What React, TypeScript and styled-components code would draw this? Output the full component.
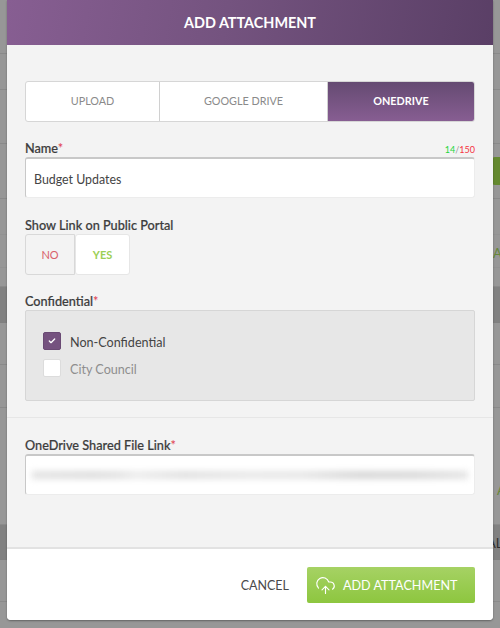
import React from 'react';
import styled, { createGlobalStyle } from 'styled-components';
import { CloudUpload, Check } from 'lucide-react';

const GlobalStyle = createGlobalStyle`
    html, body {
        margin: 0;
        padding: 0;
        height: 100%;
        overflow: hidden;
        background: #979797;
        font-family: Lato, "Open Sans", sans-serif;
    }
    * {
        box-sizing: border-box;
    }
`;

const Page = styled.div`
    position: relative;
    width: 500px;
    height: 628px;
    overflow: hidden;
    background: #979797;
`;

const BackRow = styled.div<{ $height: number; $band?: boolean; $faint?: boolean }>`
    position: relative;
    height: ${({ $height }) => $height}px;
    border-bottom: 1px solid ${({ $band, $faint }) => ($band ? '#808080' : $faint ? '#929292' : '#8a8a8a')};
    background: ${({ $band }) => ($band ? '#818181' : '#979797')};
`;

const BackButton = styled.div`
    position: absolute;
    top: 13px;
    right: 0;
    width: 8px;
    height: 28px;
    border-radius: 3px 0 0 3px;
    background: #64892f;
`;

const BackText = styled.span<{ $color: string; $top: number; $left: number }>`
    position: absolute;
    top: ${({ $top }) => $top}px;
    left: ${({ $left }) => $left}px;
    font-size: 13px;
    line-height: 16px;
    white-space: nowrap;
    color: ${({ $color }) => $color};
`;

const Modal = styled.div`
    position: absolute;
    top: 0;
    left: 7px;
    width: 486px;
    height: 620px;
    display: flex;
    flex-direction: column;
    border-radius: 0 0 4px 4px;
    overflow: hidden;
    background: #f3f3f3;
    box-shadow: 0 1px 2px rgba(0, 0, 0, 0.35);
`;

const Header = styled.div`
    height: 45px;
    flex: none;
    display: flex;
    align-items: center;
    justify-content: center;
    background: linear-gradient(100deg, #875e92 0%, #74537f 45%, #5a3f66 100%);
    color: #fff;
    font-size: 14.4px;
    font-weight: 700;
`;

const Body = styled.div`
    flex: 1;
    display: flex;
    flex-direction: column;
    min-height: 0;
`;

const Section = styled.div`
    padding: 36px 18px 0;
`;

const Tabs = styled.div`
    display: flex;
    height: 41px;
    overflow: hidden;
    border: 1px solid #d6d6d6;
    border-radius: 3px;
    background: #fff;
`;

const Tab = styled.div<{ $width: number; $active?: boolean }>`
    width: ${({ $width }) => $width}px;
    padding-bottom: 2px;
    display: flex;
    align-items: center;
    justify-content: center;
    font-size: 10.8px;
    font-weight: ${({ $active }) => ($active ? 700 : 400)};
    color: ${({ $active }) => ($active ? '#fff' : '#8a8a8a')};
    border-right: ${({ $active }) => ($active ? 'none' : '1px solid #d0d0d0')};
    background: ${({ $active }) =>
        $active ? 'linear-gradient(180deg, #654a72 0%, #875e92 100%)' : 'transparent'};
`;

const LabelRow = styled.div<{ $top: number }>`
    display: flex;
    align-items: flex-end;
    justify-content: space-between;
    height: 16px;
    margin-top: ${({ $top }) => $top}px;
`;

const Label = styled.label`
    font-size: 12.7px;
    line-height: 16px;
    font-weight: 500;
    color: #3d3d3d;
    -webkit-text-stroke: 0.2px #3d3d3d;
`;

const Required = styled.span`
    color: #e0404f;
    -webkit-text-stroke: 0;
`;

const Counter = styled.span`
    font-size: 9px;
    line-height: 12px;
    color: #999;
`;

const CountValue = styled.span<{ $color: string }>`
    color: ${({ $color }) => $color};
`;

const InputBox = styled.div`
    height: 41px;
    margin-top: 1px;
    padding-left: 8px;
    display: flex;
    align-items: center;
    border-radius: 3px;
    background: #fff;
    border-top: 2px solid #c8c8c8;
    border-left: 1px solid #c8c8c8;
    border-right: 1px solid #ececec;
    border-bottom: 1px solid #ececec;
    font-size: 12.4px;
    color: #444;
`;

const InputValue = styled.span`
    padding-top: 2px;
`;

const BlurredLink = styled.div`
    width: 436px;
    height: 8px;
    margin-left: -2px;
    filter: blur(3px);
    background: linear-gradient(
        90deg,
        #e2e2e2 0%,
        #dddddd 14%,
        #e2e2e2 20%,
        #ececec 24%,
        #e0e0e0 35%,
        #e8e8e8 50%,
        #e6e6e6 62%,
        #d6d6d6 75%,
        #d8d8d8 88%,
        #e4e4e4 100%
    );
`;

const Toggle = styled.div`
    display: flex;
    height: 41px;
    margin-top: 1px;
`;

const ToggleOption = styled.div<{ $width: number; $on?: boolean; $color: string }>`
    width: ${({ $width }) => $width}px;
    display: flex;
    align-items: center;
    justify-content: center;
    font-size: 11px;
    font-weight: ${({ $on }) => ($on ? 700 : 400)};
    color: ${({ $color }) => $color};
    background: ${({ $on }) => ($on ? '#fff' : '#f3f3f3')};
    border: 1px solid ${({ $on }) => ($on ? '#e6e6e6' : '#d8d8d8')};
    border-radius: ${({ $on }) => ($on ? '3px' : '3px 0 0 3px')};
`;

const OptionsBox = styled.div`
    height: 91px;
    margin-top: 1px;
    padding: 21px 17px 0;
    display: flex;
    flex-direction: column;
    gap: 9px;
    border: 1px solid #d6d6d6;
    border-radius: 2px;
    background: #e7e7e7;
`;

const Option = styled.div`
    display: flex;
    align-items: center;
    gap: 9px;
    height: 18px;
`;

const CheckBox = styled.span<{ $checked?: boolean }>`
    width: 18px;
    height: 18px;
    flex: none;
    display: flex;
    align-items: center;
    justify-content: center;
    border-radius: 2px;
    color: #fff;
    background: ${({ $checked }) => ($checked ? '#75527f' : '#fff')};
    border: 1px solid ${({ $checked }) => ($checked ? '#6a4a74' : '#dcdcdc')};
`;

const OptionText = styled.span<{ $muted?: boolean }>`
    padding-top: 2px;
    font-size: 12.6px;
    color: ${({ $muted }) => ($muted ? '#8e8e8e' : '#444')};
`;

const Divider = styled.div`
    height: 1px;
    margin-top: 16px;
    background: #e6e6e6;
`;

const LinkSection = styled.div`
    padding: 19px 18px 0;
`;

const Footer = styled.div`
    height: 73px;
    flex: none;
    padding: 18px 18px 0 0;
    display: flex;
    justify-content: flex-end;
    gap: 18px;
    background: #fff;
    border-top: 2px solid #e2e2e2;
`;

const CancelButton = styled.button`
    height: 36px;
    padding: 0;
    border: none;
    background: none;
    font-family: inherit;
    font-size: 12.5px;
    color: #4a4a4a;
`;

const SubmitButton = styled.button`
    width: 168px;
    height: 36px;
    padding: 0 0 0 8px;
    display: flex;
    align-items: center;
    gap: 7px;
    border: none;
    border-radius: 2px;
    background: linear-gradient(180deg, #a6d264 0%, #8dc63f 100%);
    font-family: inherit;
    font-size: 12.6px;
    color: #fff;
`;

const backRows = [
    { height: 54 },
    { height: 36 },
    { height: 54 },
    { height: 55 },
    { height: 36, faint: true },
    { height: 33, faint: true },
    { height: 19 },
    { height: 36, band: true },
    { height: 42 },
    { height: 43 },
    { height: 117 },
    { height: 35, band: true },
    { height: 42 },
];

const App = () => {
    return (
        <Page>
            <GlobalStyle />
            {backRows.map((row, index) => (
                <BackRow key={index} $height={row.height} $band={row.band} $faint={row.faint}>
                    {index === 3 && <BackButton />}
                </BackRow>
            ))}
            <BackText $color="#66883a" $top={245} $left={493}>AT</BackText>
            <BackText $color="#66883a" $top={482} $left={497}>A</BackText>
            <BackText $color="#2f2f2f" $top={535} $left={487}>AL</BackText>
            <Modal>
                <Header>ADD ATTACHMENT</Header>
                <Body>
                    <Section>
                        <Tabs>
                            <Tab $width={134}>UPLOAD</Tab>
                            <Tab $width={168}>GOOGLE DRIVE</Tab>
                            <Tab $width={146} $active>ONEDRIVE</Tab>
                        </Tabs>
                        <LabelRow $top={18}>
                            <Label>Name<Required>*</Required></Label>
                            <Counter>
                                <CountValue $color="#22d63c">14</CountValue>/
                                <CountValue $color="#f5333f">150</CountValue>
                            </Counter>
                        </LabelRow>
                        <InputBox>
                            <InputValue>Budget Updates</InputValue>
                        </InputBox>
                        <LabelRow $top={19}>
                            <Label>Show Link on Public Portal</Label>
                        </LabelRow>
                        <Toggle>
                            <ToggleOption $width={50} $color="#d9606a">NO</ToggleOption>
                            <ToggleOption $width={55} $on $color="#9ccf55">YES</ToggleOption>
                        </Toggle>
                        <LabelRow $top={18}>
                            <Label>Confidential<Required>*</Required></Label>
                        </LabelRow>
                        <OptionsBox>
                            <Option>
                                <CheckBox $checked>
                                    <Check size={8} strokeWidth={4} />
                                </CheckBox>
                                <OptionText>Non-Confidential</OptionText>
                            </Option>
                            <Option>
                                <CheckBox />
                                <OptionText $muted>City Council</OptionText>
                            </Option>
                        </OptionsBox>
                    </Section>
                    <Divider />
                    <LinkSection>
                        <LabelRow $top={0}>
                            <Label>OneDrive Shared File Link<Required>*</Required></Label>
                        </LabelRow>
                        <InputBox>
                            <BlurredLink />
                        </InputBox>
                    </LinkSection>
                </Body>
                <Footer>
                    <CancelButton>CANCEL</CancelButton>
                    <SubmitButton>
                        <CloudUpload size={21} strokeWidth={1.3} />
                        ADD ATTACHMENT
                    </SubmitButton>
                </Footer>
            </Modal>
        </Page>
    );
};

export default App;
